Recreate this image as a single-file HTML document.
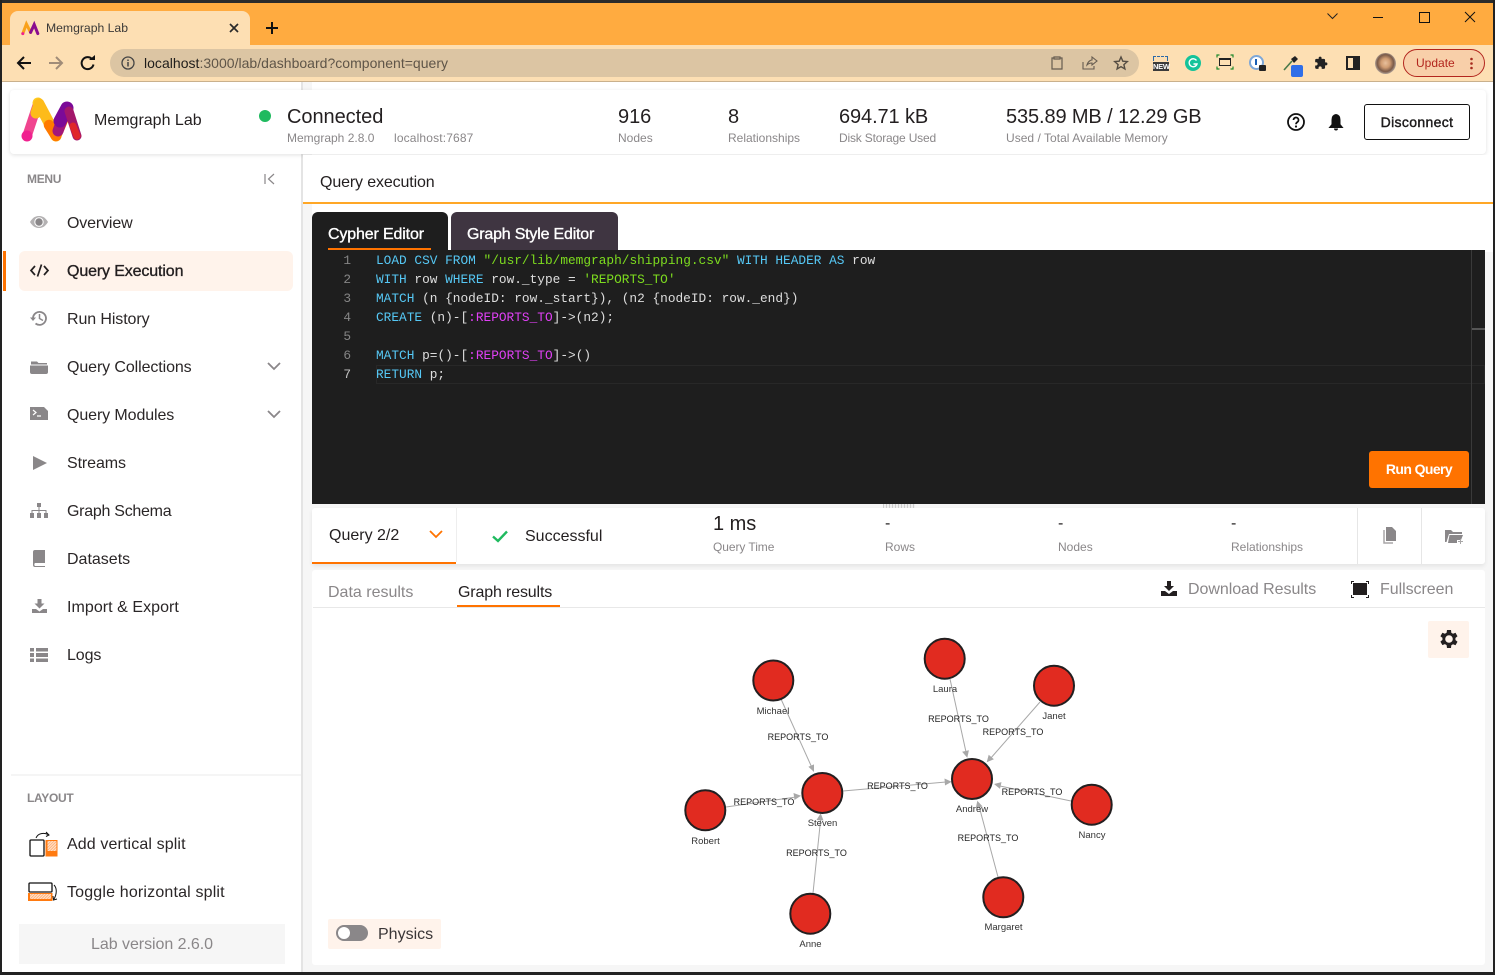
<!DOCTYPE html>
<html><head><meta charset="utf-8"><title>Memgraph Lab</title>
<style>
html,body{margin:0;padding:0;width:1495px;height:975px;overflow:hidden;background:#fff;font-family:"Liberation Sans",sans-serif;color:#231f20}
.a{position:absolute}
.t{position:absolute;white-space:nowrap;line-height:20px}
.m{font-size:16px;color:#2a2627;left:67px;letter-spacing:-.1px}
.s{font-size:12px;color:#8a8789}
.b{font-size:20px;color:#231f20;letter-spacing:-.05px}
.code{position:absolute;left:376px;font:12.8px/19px "Liberation Mono",monospace;color:#dedede;white-space:pre}
.n{position:absolute;width:20px;left:331px;text-align:right;font:12.8px/19px "Liberation Mono",monospace;color:#858585}
.k{color:#56c8f5}.g{color:#7ddc1f}.p{color:#e040f5}
.sb{-webkit-text-stroke:.35px currentColor}
svg{position:absolute;overflow:visible}
</style></head><body>
<!-- window chrome -->
<div class="a" style="left:0;top:3px;width:1495px;height:42px;background:#ffab40"></div>
<div class="a" style="left:0;top:45px;width:1495px;height:36px;background:#fddfb3"></div>
<div class="a" style="left:0;top:0;width:1495px;height:3px;background:#2b2b2b"></div>
<div class="a" style="left:0;top:81px;width:1495px;height:1px;background:#c9b08c"></div>
<div class="a" style="left:10px;top:11px;width:240px;height:34px;background:#fddfb3;border-radius:8px 8px 0 0"></div>
<svg style="left:21px;top:21px" width="18" height="15" viewBox="0 0 60 46"><path d="M6 40 L18 8 L32 36" fill="none" stroke="#f9a11b" stroke-width="10" stroke-linecap="round"/><path d="M32 36 L44 10 L56 40" fill="none" stroke="#8a0d8f" stroke-width="10" stroke-linecap="round"/><circle cx="6" cy="40" r="5" fill="#f0218f"/></svg>
<div class="t" style="left:46px;top:18px;font-size:12.2px;color:#3c3a38">Memgraph Lab</div>
<svg style="left:229px;top:23px" width="10" height="10" viewBox="0 0 10 10"><path d="M1 1L9 9M9 1L1 9" stroke="#2a2a2a" stroke-width="1.7"/></svg>
<svg style="left:266px;top:22px" width="12" height="12" viewBox="0 0 12 12"><path d="M6 0V12M0 6H12" stroke="#111" stroke-width="2"/></svg>
<svg style="left:1327px;top:13px" width="11" height="7" viewBox="0 0 11 7"><path d="M.5 .5L5.5 5.5L10.5 .5" fill="none" stroke="#222" stroke-width="1"/></svg>
<div class="a" style="left:1373px;top:17px;width:10px;height:1px;background:#111"></div>
<div class="a" style="left:1419px;top:12px;width:9px;height:9px;border:1px solid #111"></div>
<svg style="left:1465px;top:12px" width="10" height="10" viewBox="0 0 10 10"><path d="M0 0L10 10M10 0L0 10" stroke="#111" stroke-width="1"/></svg>
<!-- toolbar -->
<svg style="left:16px;top:55px" width="16" height="16" viewBox="0 0 16 16"><path d="M15 8H2M8 2L2 8L8 14" fill="none" stroke="#111" stroke-width="2"/></svg>
<svg style="left:48px;top:55px" width="16" height="16" viewBox="0 0 16 16"><path d="M1 8H14M8 2L14 8L8 14" fill="none" stroke="#a08c78" stroke-width="2"/></svg>
<svg style="left:80px;top:55px" width="16" height="16" viewBox="0 0 16 16"><path d="M13.5 9.5A6 6 0 1 1 12 4" fill="none" stroke="#111" stroke-width="2"/><path d="M9 5H15V0Z" fill="#111"/></svg>
<div class="a" style="left:110px;top:49px;width:1029px;height:28px;background:#dcc5a3;border-radius:14px"></div>
<svg style="left:121px;top:56px" width="14" height="14" viewBox="0 0 14 14"><circle cx="7" cy="7" r="6" fill="none" stroke="#444" stroke-width="1.3"/><path d="M7 6V10.5M7 3.5V5" stroke="#444" stroke-width="1.5"/></svg>
<div class="t" style="left:144px;top:53px;font-size:14px;letter-spacing:.02px"><span style="color:#1f1d1b">localhost</span><span style="color:#5f5548">:3000/lab/dashboard?component=query</span></div>
<svg style="left:1051px;top:56px" width="12" height="14" viewBox="0 0 12 14"><path d="M3 2H1V13H11V2H9M3 1H9V3H3Z" fill="none" stroke="#665c50" stroke-width="1.2"/></svg>
<svg style="left:1082px;top:56px" width="15" height="14" viewBox="0 0 15 14"><path d="M1 6V13H12V10M5 9C6 5 9 4 10 4V1L15 5L10 9V7C8 7 6 8 5 9Z" fill="none" stroke="#665c50" stroke-width="1.1"/></svg>
<svg style="left:1114px;top:56px" width="14" height="14" viewBox="0 0 14 14"><path d="M7 1L8.8 5.2L13.3 5.6L9.9 8.6L10.9 13L7 10.7L3.1 13L4.1 8.6L.7 5.6L5.2 5.2Z" fill="none" stroke="#544c42" stroke-width="1.4"/></svg>
<div class="a" style="left:1153px;top:56px;width:15px;height:5px;border:1px dashed #2c6aa8;border-bottom:0;box-sizing:border-box"></div>
<div class="a" style="left:1153px;top:62px;width:16px;height:9px;background:#3b3b3b;color:#fff;font-size:7.5px;font-weight:bold;line-height:9px;text-align:center;letter-spacing:-.3px">NEW</div>
<div class="a" style="left:1185px;top:55px;width:16px;height:16px;border-radius:50%;background:#15c39a"></div>
<svg style="left:1188px;top:58px" width="10" height="10" viewBox="0 0 10 10"><path d="M8.5 2.5A4 4 0 1 0 9 6H5.5" fill="none" stroke="#fff" stroke-width="1.4"/></svg>
<div class="a" style="left:1219px;top:58px;width:12px;height:8px;border:1.2px solid #222;border-top-width:2.4px;box-sizing:border-box"></div>
<svg style="left:1217px;top:55px" width="16" height="14" viewBox="0 0 16 14"><path d="M0 2.500V0H2.500M13.500 0H16V2.500M16 11.500V14H13.500M2.500 14H0V11.500" fill="none" stroke="#1f8a2c" stroke-width="1.2"/></svg>
<div class="a" style="left:1249px;top:55px;width:15px;height:15px;border-radius:50%;border:2px solid #7da7d8;box-sizing:border-box;background:#fff"></div>
<div class="a" style="left:1255px;top:59px;width:2px;height:6px;background:#1a5fb4"></div>
<div class="a" style="left:1259px;top:65px;width:7px;height:6px;background:#222;border-radius:1px"></div>
<svg style="left:1283px;top:56px" width="15" height="15" viewBox="0 0 15 15"><path d="M1 14L9 5" stroke="#4a7a4a" stroke-width="1.6"/><path d="M8 3L12 0L15 3L11 7Z" fill="#222"/></svg>
<div class="a" style="left:1291px;top:65px;width:12px;height:12px;background:#2f6ee8;border-radius:2px"></div>
<svg style="left:1314px;top:56px" width="14" height="14" viewBox="0 0 24 24"><path d="M20.5 11H19V7a2 2 0 0 0-2-2h-4V3.500a2.500 2.500 0 0 0-5 0V5H4a2 2 0 0 0-2 2v3.800h1.500a2.700 2.700 0 0 1 0 5.400H2V20a2 2 0 0 0 2 2h3.800v-1.500a2.700 2.700 0 0 1 5.400 0V22H17a2 2 0 0 0 2-2v-4h1.500a2.500 2.500 0 0 0 0-5z" fill="#222"/></svg>
<div class="a" style="left:1346px;top:56px;width:14px;height:14px;border:2px solid #222;box-sizing:border-box"></div>
<div class="a" style="left:1353px;top:56px;width:7px;height:14px;background:#222"></div>
<div class="a" style="left:1375px;top:53px;width:21px;height:21px;border-radius:50%;background:radial-gradient(ellipse at 50% 48%,#e8c09c 0,#d09c72 30%,#7a5a48 55%,#cfcac4 80%)"></div>
<div class="a" style="left:1403px;top:49px;width:82px;height:28px;box-sizing:border-box;border:1px solid #b3261e;border-radius:14px;background:#f8cfa9"></div>
<div class="t" style="left:1416px;top:53px;font-size:12px;color:#b3261e">Update</div>
<svg style="left:1469px;top:57px" width="5" height="13" viewBox="0 0 5 13"><circle cx="2.500" cy="2" r="1.300" fill="#a52a1e"/><circle cx="2.500" cy="6.500" r="1.300" fill="#a52a1e"/><circle cx="2.500" cy="11" r="1.300" fill="#a52a1e"/></svg>
<!-- app bg -->
<div class="a" style="left:0;top:0;width:2px;height:975px;background:#222"></div>
<div class="a" style="left:1493px;top:0;width:2px;height:975px;background:#222"></div>
<div class="a" style="left:301px;top:82px;width:11px;height:893px;background:#f6f6f6;border-left:2px solid #e4e4e4;box-sizing:border-box"></div>
<div class="a" style="left:312px;top:204px;width:1181px;height:771px;background:#f6f6f6"></div>
<div class="a" style="left:2px;top:972px;width:1491px;height:3px;background:#222"></div>
<!-- header card -->
<div class="a" style="left:10px;top:90px;width:1476px;height:64px;background:#fff;border-radius:4px;box-shadow:0 1px 4px rgba(0,0,0,.12)"></div>
<svg style="left:22px;top:97px" width="60" height="46" viewBox="0 0 60 46"><path d="M5 39L16 6" stroke="#f0458f" stroke-width="9.500" stroke-linecap="round" fill="none"/><path d="M16 6L18 12" stroke="#ffcb1f" stroke-width="11" stroke-linecap="round"/><path d="M14 16L17 7L34 39" stroke="#fdbb1a" stroke-width="11" stroke-linecap="round" stroke-linejoin="round" fill="none"/><path d="M27 28L34 39L44 16" stroke="#ff7a00" stroke-width="10.500" stroke-linecap="round" stroke-linejoin="round" fill="none"/><path d="M36 34L44 12" stroke="#a2177a" stroke-width="11" stroke-linecap="round" fill="none"/><path d="M38 24L45 11" stroke="#7b0a98" stroke-width="13" stroke-linecap="round" fill="none"/><path d="M47 14L55 39" stroke="#a3176b" stroke-width="9" stroke-linecap="round" fill="none"/><path d="M51 29L55 39" stroke="#e0262a" stroke-width="7" stroke-linecap="round" fill="none"/><circle cx="5" cy="39" r="5.500" fill="#f0218f"/></svg>
<div class="t" style="left:94px;top:109px;font-size:16px;padding-top:1px;margin-top:1px">Memgraph Lab</div>
<div class="a" style="left:259px;top:110px;width:12px;height:12px;border-radius:50%;background:#1fba5f"></div>
<div class="t b" style="left:287px;top:107px">Connected</div>
<div class="t s" style="left:287px;top:128px">Memgraph 2.8.0</div>
<div class="t s" style="left:394px;top:128px;letter-spacing:.15px">localhost:7687</div>
<div class="t b" style="left:618px;top:107px">916</div><div class="t s" style="left:618px;top:128px">Nodes</div>
<div class="t b" style="left:728px;top:107px">8</div><div class="t s" style="left:728px;top:128px">Relationships</div>
<div class="t b" style="left:839px;top:107px;letter-spacing:-.1px">694.71 kB</div><div class="t s" style="left:839px;top:128px;letter-spacing:-.18px">Disk Storage Used</div>
<div class="t b" style="left:1006px;top:107px;letter-spacing:-.12px">535.89 MB / 12.29 GB</div><div class="t s" style="left:1006px;top:128px;letter-spacing:.03px">Used / Total Available Memory</div>
<svg style="left:1287px;top:113px" width="18" height="18" viewBox="0 0 18 18"><circle cx="9" cy="9" r="8" fill="none" stroke="#111" stroke-width="1.800"/><path d="M6.500 7A2.500 2.500 0 1 1 10.500 9C9.500 9.700 9 10.200 9 11.300" fill="none" stroke="#111" stroke-width="1.700"/><circle cx="9" cy="13.500" r="1.100" fill="#111"/></svg>
<svg style="left:1329px;top:113px" width="14" height="18" viewBox="0 0 14 18"><path d="M7 1.500C3.800 2 3 4.500 3 7V11.500L.5 14.500H13.500L11 11.500V7C11 4.500 10.200 2 7 1.500Z" fill="#111" stroke="#111"/><path d="M5 15.500H9A2 2 0 0 1 5 15.500Z" fill="#111"/></svg>
<div class="a sb" style="left:1364px;top:104px;width:106px;height:36px;box-sizing:border-box;border:1px solid #111;border-radius:3px;background:#fff;text-align:center;font-size:14px;line-height:34px;letter-spacing:.35px;-webkit-text-stroke:.4px #111">Disconnect</div>
<!-- sidebar -->
<div class="t" style="left:27px;top:169px;font-size:12px;font-weight:bold;color:#8a8789;letter-spacing:-.3px">MENU</div>
<svg style="left:264px;top:173px" width="12" height="12" viewBox="0 0 12 12"><path d="M1 1V11M10 1L4.500 6L10 11" fill="none" stroke="#8a8789" stroke-width="1.200"/></svg>
<div class="a" style="left:3px;top:251px;width:3px;height:40px;background:#ff7300"></div>
<div class="a" style="left:19px;top:251px;width:274px;height:40px;background:#fff3eb;border-radius:6px"></div>
<svg style="left:30px;top:215px" width="18" height="14" viewBox="0 0 18 14"><path d="M0 7C3 2 6 1 9 1S15 2 18 7C15 12 12 13 9 13S3 12 0 7Z" fill="#b4b2b3"/><circle cx="9" cy="7" r="4.200" fill="#8a8789" stroke="#fff"/></svg>
<div class="t m" style="top:214px;letter-spacing:-.15px">Overview</div>
<svg style="left:30px;top:264px" width="19" height="13" viewBox="0 0 19 13"><path d="M5 2L1 6.500L5 11M14 2L18 6.500L14 11M11.500 .5L7.500 12.500" fill="none" stroke="#231f20" stroke-width="1.700"/></svg>
<div class="t m sb" style="top:262px;letter-spacing:-.13px;color:#231f20">Query Execution</div>
<svg style="left:30px;top:309px" width="18" height="18" viewBox="0 0 18 18"><path d="M3 9A6.500 6.500 0 1 1 5.500 14.500" fill="none" stroke="#8a8789" stroke-width="1.800"/><path d="M0 8.500H6L3 12Z" fill="#8a8789"/><path d="M9.500 5V9.500L13 11.500" fill="none" stroke="#8a8789" stroke-width="1.500"/></svg>
<div class="t m" style="top:310px">Run History</div>
<svg style="left:30px;top:359px" width="18" height="15" viewBox="0 0 18 15"><path d="M1 2.500H7L8.500 4H17V5.500H1Z M0 6.500H18V13A2 2 0 0 1 16 15H2A2 2 0 0 1 0 13Z" fill="#8a8789"/></svg>
<div class="t m" style="top:358px">Query Collections</div>
<svg style="left:267px;top:362px" width="14" height="9" viewBox="0 0 14 9"><path d="M1 1L7 7L13 1" fill="none" stroke="#8a8789" stroke-width="1.800"/></svg>
<svg style="left:30px;top:407px" width="18" height="13" viewBox="0 0 18 13"><path d="M0 0H14L18 4V13H0Z" fill="#8a8789"/><path d="M3 3L6 5.500L3 8M7 9H11" fill="none" stroke="#fff" stroke-width="1.200"/></svg>
<div class="t m" style="top:406px">Query Modules</div>
<svg style="left:267px;top:410px" width="14" height="9" viewBox="0 0 14 9"><path d="M1 1L7 7L13 1" fill="none" stroke="#8a8789" stroke-width="1.800"/></svg>
<svg style="left:33px;top:455px" width="14" height="16" viewBox="0 0 14 16"><path d="M0 1L14 8L0 15Z" fill="#8a8789"/></svg>
<div class="t m" style="top:454px">Streams</div>
<svg style="left:30px;top:503px" width="18" height="15" viewBox="0 0 18 15"><path d="M7 0H11V4H7ZM0 10H4V15H0ZM7 10H11V15H7ZM14 10H18V15H14ZM8.500 4H9.500V7H16.500V10H15.500V8H9.500V10H8.500V8H2.500V10H1.500V7H8.500Z" fill="#8a8789"/></svg>
<div class="t m" style="top:502px;letter-spacing:-.27px">Graph Schema</div>
<svg style="left:33px;top:550px" width="12" height="17" viewBox="0 0 12 17"><path d="M2 0H12V13H2A2 2 0 0 0 2 16H12V17H2A2 2 0 0 1 0 15V2A2 2 0 0 1 2 0Z" fill="#8a8789"/></svg>
<div class="t m" style="top:550px;letter-spacing:0">Datasets</div>
<svg style="left:32px;top:599px" width="15" height="14" viewBox="0 0 15 14"><path d="M5.500 0H9.500V4.500H12.500L7.500 9.500L2.500 4.500H5.500ZM0 10H4L7.500 12.500L11 10H15V14H0Z" fill="#8a8789"/></svg>
<div class="t m" style="top:598px;letter-spacing:.05px">Import &amp; Export</div>
<svg style="left:30px;top:648px" width="18" height="14" viewBox="0 0 18 14"><path d="M0 0H4V3.500H0ZM6 0H18V3.500H6ZM0 5H4V9H0ZM6 5H18V9H6ZM0 10.500H4V14H0ZM6 10.500H18V14H6Z" fill="#8a8789"/></svg>
<div class="t m" style="top:646px">Logs</div>
<div class="a" style="left:11px;top:774px;width:290px;height:2px;background:#f5f5f5"></div>
<div class="t" style="left:27px;top:788px;font-size:12px;font-weight:bold;color:#8a8789;letter-spacing:-.3px">LAYOUT</div>
<svg style="left:28px;top:831px" width="30" height="27" viewBox="0 0 30 27"><defs><pattern id="h" width="2" height="2" patternUnits="userSpaceOnUse" patternTransform="rotate(45)"><rect width="2" height="2" fill="#ffb27a"/><rect width="1" height="2" fill="#ffe4cf"/></pattern></defs><rect x="2" y="9" width="14" height="16" rx="1" fill="#fff" stroke="#111" stroke-width="1.300"/><rect x="17.500" y="9" width="12" height="16.500" fill="#ff7a10"/><rect x="19.500" y="10" width="9" height="10" fill="url(#h)"/><path d="M8 7C10 2 16 1.500 20 3.500M18 1L21 4L18 5.500" fill="none" stroke="#111"/></svg>
<div class="t m" style="top:835px;letter-spacing:.12px">Add vertical split</div>
<svg style="left:28px;top:882px" width="30" height="20" viewBox="0 0 30 20"><rect x="1" y="1" width="23" height="9" rx="1" fill="#fff" stroke="#111" stroke-width="1.300"/><rect x="0" y="11" width="24.500" height="8" fill="#ff7a10"/><rect x="2" y="12" width="21" height="5" fill="url(#h)"/><path d="M26 3C29 6 29 12 26 17M25 14L25.500 18L29 17" fill="none" stroke="#111"/></svg>
<div class="t m" style="top:883px;letter-spacing:.17px">Toggle horizontal split</div>
<div class="a" style="left:19px;top:924px;width:266px;height:40px;background:#f6f6f6;text-align:center;font-size:16px;line-height:41px;color:#8a8789;letter-spacing:-.05px">Lab version 2.6.0</div>
<!-- main -->
<div class="a" style="left:303px;top:155px;width:1190px;height:48px;background:#fff"></div>
<div class="a" style="left:303px;top:202px;width:1190px;height:2px;background:#ffa726"></div>
<div class="a" style="left:312px;top:204px;width:1181px;height:48px;background:#fff"></div>
<div class="t" style="left:320px;top:173px;font-size:16px;letter-spacing:-.13px">Query execution</div>
<div class="a" style="left:312px;top:212px;width:136px;height:38px;background:#1e1e1e;border-radius:6px 6px 0 0"></div>
<div class="a" style="left:451px;top:212px;width:167px;height:38px;background:#3f3541;border-radius:6px 6px 0 0"></div>
<div class="t sb" style="left:328px;top:225px;font-size:16px;color:#fff;letter-spacing:-.15px">Cypher Editor</div>
<div class="a" style="left:328px;top:248px;width:103px;height:2px;background:#ff7300"></div>
<div class="t sb" style="left:467px;top:225px;font-size:16px;color:#fff;letter-spacing:-.2px">Graph Style Editor</div>
<div class="a" style="left:312px;top:250px;width:1173px;height:254px;background:#1e1e1e"></div>
<div class="a" style="left:376px;top:365px;width:1109px;height:19px;box-sizing:border-box;border:1.5px solid #282828"></div>
<div class="a" style="left:1471px;top:250px;width:1px;height:254px;background:#3a3a3a"></div>
<div class="a" style="left:1472px;top:328px;width:13px;height:2px;background:#555"></div>
<div class="n" style="top:251px">1</div><div class="code" style="top:251px"><span class="k">LOAD CSV FROM</span> <span class="g">"/usr/lib/memgraph/shipping.csv"</span> <span class="k">WITH HEADER AS</span> row</div>
<div class="n" style="top:270px">2</div><div class="code" style="top:270px"><span class="k">WITH</span> row <span class="k">WHERE</span> row._type = <span class="g">'REPORTS_TO'</span></div>
<div class="n" style="top:289px">3</div><div class="code" style="top:289px"><span class="k">MATCH</span> (n {nodeID: row._start}), (n2 {nodeID: row._end})</div>
<div class="n" style="top:308px">4</div><div class="code" style="top:308px"><span class="k">CREATE</span> (n)-[<span class="p">:REPORTS_TO</span>]-&gt;(n2);</div>
<div class="n" style="top:327px">5</div>
<div class="n" style="top:346px">6</div><div class="code" style="top:346px"><span class="k">MATCH</span> p=()-[<span class="p">:REPORTS_TO</span>]-&gt;()</div>
<div class="n" style="top:365px;color:#c6c6c6">7</div><div class="code" style="top:365px"><span class="k">RETURN</span> p;</div>
<div class="a" style="left:1369px;top:451px;width:100px;height:37px;background:#ff7300;border-radius:3px;color:#fff;font-size:14px;font-weight:bold;line-height:37px;text-align:center;letter-spacing:-.6px">Run Query</div>
<!-- status -->
<div class="a" style="left:312px;top:508px;width:1173px;height:56px;background:#fff;border-radius:3px;box-shadow:0 2px 4px rgba(0,0,0,.08)"></div>
<div class="a" style="left:883px;top:504px;width:32px;height:4px;background:repeating-linear-gradient(90deg,#ccc 0 1px,#eee 1px 3px)"></div>
<div class="a" style="left:312px;top:562px;width:144px;height:2px;background:#ff7300"></div>
<div class="a" style="left:456px;top:508px;width:1px;height:54px;background:#eee"></div>
<div class="t" style="left:329px;top:526px;font-size:16px">Query 2/2</div>
<svg style="left:429px;top:530px" width="14" height="9" viewBox="0 0 14 9"><path d="M1 1L7 7L13 1" fill="none" stroke="#ff7300" stroke-width="1.800"/></svg>
<svg style="left:492px;top:530px" width="16" height="13" viewBox="0 0 16 13"><path d="M1 6.500L6 11L15 1.500" fill="none" stroke="#1fba5f" stroke-width="2.400"/></svg>
<div class="t" style="left:525px;top:527px;font-size:16px">Successful</div>
<div class="t b" style="left:713px;top:514px">1 ms</div><div class="t s" style="left:713px;top:537px;letter-spacing:-.07px">Query Time</div>
<div class="t" style="left:885px;top:514px;font-size:16px">-</div><div class="t s" style="left:885px;top:537px">Rows</div>
<div class="t" style="left:1058px;top:514px;font-size:16px">-</div><div class="t s" style="left:1058px;top:537px">Nodes</div>
<div class="t" style="left:1231px;top:514px;font-size:16px">-</div><div class="t s" style="left:1231px;top:537px">Relationships</div>
<div class="a" style="left:1357px;top:508px;width:1px;height:56px;background:#e6e6e6"></div>
<div class="a" style="left:1421px;top:508px;width:1px;height:56px;background:#e6e6e6"></div>
<svg style="left:1383px;top:527px" width="14" height="17" viewBox="0 0 14 17"><path d="M3 0H9L13 4V14H3Z" fill="#8a8789"/><path d="M1 3V16H10" fill="none" stroke="#a8a6a7" stroke-width="1.500"/></svg>
<svg style="left:1445px;top:529px" width="18" height="15" viewBox="0 0 18 15"><path d="M0 1H6L8 3H17V5H4L1.500 13H0Z M4.500 6H18L16 11H12V14H3Z" fill="#8a8789"/><path d="M13 12.500H18M15.500 10V15" stroke="#a8a6a7"/></svg>
<!-- results -->
<div class="a" style="left:312px;top:570px;width:1173px;height:395px;background:#fff;border-radius:3px"></div>
<div class="a" style="left:313px;top:607px;width:1172px;height:1px;background:#e8e8e8"></div>
<div class="t" style="left:328px;top:583px;font-size:16px;color:#8a8789">Data results</div>
<div class="t" style="left:458px;top:583px;font-size:16px;letter-spacing:-.15px">Graph results</div>
<div class="a" style="left:457px;top:605px;width:103px;height:2px;background:#ff7300"></div>
<svg style="left:1161px;top:581px" width="16" height="15" viewBox="0 0 16 15"><path d="M6 0H10V5H13L8 10L3 5H6ZM0 10H4L8 13L12 10H16V15H0Z" fill="#231f20"/></svg>
<div class="t" style="left:1188px;top:580px;font-size:16px;color:#8a8789;letter-spacing:-.05px">Download Results</div>
<div class="a" style="left:1353px;top:583px;width:14px;height:12px;background:#231f20"></div>
<svg style="left:1351px;top:581px" width="18" height="17" viewBox="0 0 18 17"><path d="M.5 3V.5H3M15 .5H17.500V3M17.500 14V16.500H15M3 16.500H.5V14" fill="none" stroke="#231f20"/></svg>
<div class="t" style="left:1380px;top:580px;font-size:16px;color:#8a8789;letter-spacing:-.05px">Fullscreen</div>
<div class="a" style="left:1428px;top:621px;width:41px;height:37px;background:#fff3eb;border-radius:2px"></div>
<svg style="left:1437px;top:627px" width="24" height="24" viewBox="0 0 24 24"><path d="M19.400 13A7.500 7.500 0 0 0 19.400 11L21.500 9.300L19.500 5.800L17 6.800A7.500 7.500 0 0 0 15.300 5.800L15 3H11L10.600 5.700A7.500 7.500 0 0 0 8.900 6.700L6.400 5.700L4.400 9.200L6.500 10.900A7.500 7.500 0 0 0 6.500 12.900L4.400 14.600L6.400 18.100L8.900 17.100A7.500 7.500 0 0 0 10.600 18.100L11 21H15L15.300 18.300A7.500 7.500 0 0 0 17 17.300L19.500 18.300L21.500 14.800Z" fill="#231f20" transform="translate(-1 0)"/><circle cx="12" cy="12" r="3.800" fill="#fff3eb"/></svg>
<!-- graph -->
<svg style="left:0;top:0" width="1495" height="975" viewBox="0 0 1495 975">
<g stroke="#a8a8a8" stroke-width="1" fill="none">
<path d="M781 699L813 770"/>
<path d="M726 807L796 797"/>
<path d="M813 893L821 816"/>
<path d="M843 791L946 782"/>
<path d="M950 679L966 752"/>
<path d="M1040 702L990 759"/>
<path d="M1071 801L1000 786"/>
<path d="M998 877L979 806"/>
</g>
<g fill="#a8a8a8">
<path d="M814 772L814 764.400L808.400 766.800Z"/>
<path d="M801 795.700L794.500 800L793.500 793Z"/>
<path d="M820.700 813.300L816.500 820L823.500 820.500Z"/>
<path d="M951.700 781.700L944.500 778.500L945 785.500Z"/>
<path d="M967.300 757.700L968.900 750.300L962.100 751.700Z"/>
<path d="M986.700 762.300L993.900 759.300L988.700 754.700Z"/>
<path d="M994 784L1001.500 782.100L1000 788.900Z"/>
<path d="M977.300 800.700L982.600 806.500L975.800 808.300Z"/>
</g>
<g fill="#e12b20" stroke="#231f20" stroke-width="2">
<circle cx="773.300" cy="680.500" r="20"/><circle cx="944.700" cy="658.700" r="20"/><circle cx="1054" cy="685.700" r="20"/><circle cx="972" cy="779" r="20"/><circle cx="822.300" cy="793" r="20"/><circle cx="705.300" cy="810.300" r="20"/><circle cx="1091.700" cy="804.700" r="20"/><circle cx="810.300" cy="913.700" r="20"/><circle cx="1003.300" cy="897.300" r="20"/>
</g>
<g font-family="Liberation Sans" font-size="9.500" fill="#333" text-anchor="middle">
<text x="773" y="714">Michael</text><text x="945" y="692">Laura</text><text x="1054" y="719">Janet</text><text x="972" y="812">Andrew</text><text x="822.500" y="826">Steven</text><text x="705.500" y="844">Robert</text><text x="1092" y="838">Nancy</text><text x="810.500" y="947">Anne</text><text x="1003.500" y="930">Margaret</text>
</g>
<g font-family="Liberation Sans" font-size="9" fill="#222" text-anchor="middle">
<text x="798" y="740">REPORTS_TO</text><text x="958.500" y="722">REPORTS_TO</text><text x="1013" y="735">REPORTS_TO</text><text x="897.500" y="789">REPORTS_TO</text><text x="764" y="805">REPORTS_TO</text><text x="1032" y="795">REPORTS_TO</text><text x="988" y="841">REPORTS_TO</text><text x="816.500" y="856">REPORTS_TO</text>
</g>
</svg>
<div class="a" style="left:328px;top:919px;width:113px;height:30px;background:#fff3eb;border-radius:2px"></div>
<div class="a" style="left:336px;top:925px;width:32px;height:16px;background:#8a8789;border-radius:8px"></div>
<div class="a" style="left:338px;top:927px;width:12px;height:12px;background:#fff;border-radius:50%"></div>
<div class="t" style="left:378px;top:925px;font-size:16px;color:#3a3637">Physics</div>
</body></html>
